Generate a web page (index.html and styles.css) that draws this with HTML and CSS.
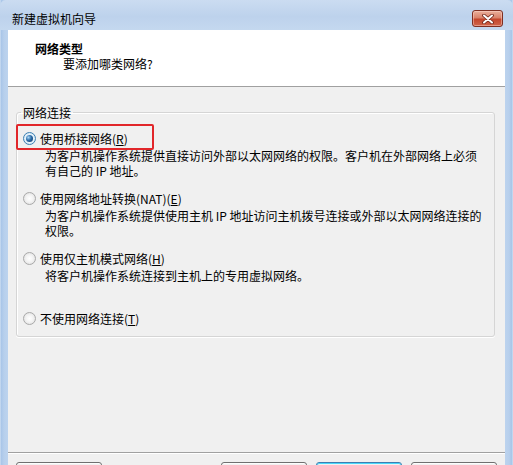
FILE: index.html
```html
<!DOCTYPE html>
<html lang="zh-CN">
<head>
<meta charset="utf-8">
<title>新建虚拟机向导</title>
<link rel="stylesheet" href="styles.css">
</head>
<body>
<div class="window">
  <div class="titlebar">
    <div class="title">新建虚拟机向导</div>
    <div class="close">
      <svg width="14" height="10" viewBox="0 0 14 10">
        <path d="M3 1.5 L11 8.5 M11 1.5 L3 8.5" stroke="#6b2418" stroke-width="3.6" stroke-linecap="round" fill="none"/>
        <path d="M3 1.5 L11 8.5 M11 1.5 L3 8.5" stroke="#ffffff" stroke-width="2" stroke-linecap="round" fill="none"/>
      </svg>
    </div>
  </div>
  <div class="client">
    <div class="header">
      <div class="h-title">网络类型</div>
      <div class="h-sub">要添加哪类网络?</div>
    </div>
    <div class="body">
      <fieldset class="group">
        <legend class="group-label">网络连接</legend>
        <div class="option">
          <div class="opt-label"><span class="radio on"></span><span>使用桥接网络(<u>R</u>)</span></div>
          <div class="desc">
            <div class="line">为客户机操作系统提供直接访问外部以太网网络的权限。客户机在外部网络上必须</div>
            <div class="line">有自己的 IP 地址。</div>
          </div>
          <div class="highlight"></div>
        </div>
        <div class="option">
          <div class="opt-label"><span class="radio"></span><span>使用网络地址转换(NAT)(<u>E</u>)</span></div>
          <div class="desc">
            <div class="line">为客户机操作系统提供使用主机 IP 地址访问主机拨号连接或外部以太网网络连接的</div>
            <div class="line">权限。</div>
          </div>
        </div>
        <div class="option">
          <div class="opt-label"><span class="radio"></span><span>使用仅主机模式网络(<u>H</u>)</span></div>
          <div class="desc">
            <div class="line">将客户机操作系统连接到主机上的专用虚拟网络。</div>
          </div>
        </div>
        <div class="option last">
          <div class="opt-label"><span class="radio"></span><span>不使用网络连接(<u>T</u>)</span></div>
        </div>
      </fieldset>
    </div>
    <div class="footer">
      <button class="btn help" aria-label="帮助"></button>
      <button class="btn" aria-label="上一步"></button>
      <button class="btn default" aria-label="下一步"></button>
      <button class="btn" aria-label="取消"></button>
    </div>
  </div>
</div>
</body>
</html>
```

FILE: styles.css
```css
* {
  box-sizing: border-box;
}

html, body {
  margin: 0;
  padding: 0;
}

body {
  width: 513px;
  height: 465px;
  overflow: hidden;
  background: #ffffff;
  font-family: "Noto Sans CJK SC", "Liberation Sans", sans-serif;
  font-size: 12px;
  line-height: 15px;
  color: #000000;
}

.window {
  width: 513px;
  height: 465px;
  overflow: hidden;
  display: flex;
  flex-direction: column;
  background: linear-gradient(to right, #dbe7f5 0, #a8c5e8 1px, #b7cfec 4px, #bcd3ee 8px, #bcd3ee 505px, #b7cfec 509px, #a8c5e8 512px, #dbe7f5 513px);
}

.titlebar {
  flex: none;
  height: 30px;
  display: flex;
  align-items: flex-start;
  justify-content: space-between;
  padding: 0 10px 0 12px;
  background: linear-gradient(#cbdcf1, #bdd2ec 55%, #c4d8ef);
  border-top-left-radius: 6px;
  border-top-right-radius: 6px;
}

.title {
  margin-top: 12px;
  line-height: 14px;
  color: #000000;
}

.close {
  margin-top: 10px;
  width: 31px;
  height: 17px;
  border: 1px solid #7e2f22;
  border-radius: 3px;
  background: linear-gradient(#eab09c, #d9826a 45%, #c4462c 55%, #d0654a);
  display: flex;
  align-items: center;
  justify-content: center;
  box-shadow: inset 0 0 0 1px rgba(255, 220, 210, 0.45);
}

.client {
  flex: none;
  margin: 0 8px;
  background: #f0f0f0;
  display: flex;
  flex-direction: column;
}

.header {
  height: 57px;
  background: #ffffff;
  border-bottom: 1px solid #a0a0a0;
  padding: 11px 0 0 27px;
}

.h-title {
  font-weight: bold;
}

.h-sub {
  padding-left: 28px;
}

.body {
  height: 365px;
  padding: 18px 10px 0 8px;
}

.group {
  margin: 0;
  min-width: 0;
  padding: 11px 6px 10px 6px;
  border: 1px solid #d5d5d5;
  border-radius: 3px;
  box-shadow: inset 1px 1px 0 #ffffff, 0 1px 0 #ffffff;
}

.group-label {
  padding: 0 2px;
  margin-left: -2px;
  line-height: 15px;
}

.option {
  position: relative;
  height: 60px;
}

.option.last {
  height: 15px;
}

.opt-label {
  display: flex;
  align-items: center;
  height: 15px;
  white-space: nowrap;
}

.radio {
  flex: none;
  width: 13px;
  height: 13px;
  margin-right: 4px;
  border-radius: 50%;
  border: 1px solid #a9a9a9;
  background: radial-gradient(circle at 50% 50%, #ffffff 0, #f3f3f3 45%, #d9d9d9 100%);
  display: flex;
  align-items: center;
  justify-content: center;
}

.radio.on {
  border-color: #3c7fb1;
  background: radial-gradient(circle at 50% 50%, #ffffff 0, #e6f3fb 50%, #c3dff2 100%);
}

.radio.on::after {
  content: "";
  width: 7px;
  height: 7px;
  border-radius: 50%;
  background: radial-gradient(circle at 35% 35%, #a9d8f8 0, #2c6ca8 45%, #0d2f5c 100%);
}

.desc {
  margin: 2px 0 0 22px;
  white-space: nowrap;
}

.line {
  height: 15px;
}

.highlight {
  position: absolute;
  top: -7px;
  left: -7px;
  width: 138px;
  height: 26px;
  border: 2px solid #e1262a;
  border-radius: 2px;
}

.footer {
  border-top: 1px solid #a0a0a0;
  box-shadow: inset 0 1px 0 #ffffff;
  padding: 9px 8px 0 8px;
  display: flex;
  gap: 9px;
  height: 48px;
}

.btn {
  flex: none;
  width: 86px;
  height: 23px;
  margin: 0;
  padding: 0;
  border: 1px solid #707070;
  border-radius: 3px;
  background: linear-gradient(#f2f2f2, #ebebeb 50%, #dddddd 50%, #cfcfcf);
  box-shadow: inset 0 0 0 1px rgba(255, 255, 255, 0.8);
  font: inherit;
  color: #000000;
}

.btn.help {
  margin-right: auto;
}

.btn.default {
  border-color: #3c7fb1;
  box-shadow: inset 0 0 0 1px #48d8fb;
}
```
